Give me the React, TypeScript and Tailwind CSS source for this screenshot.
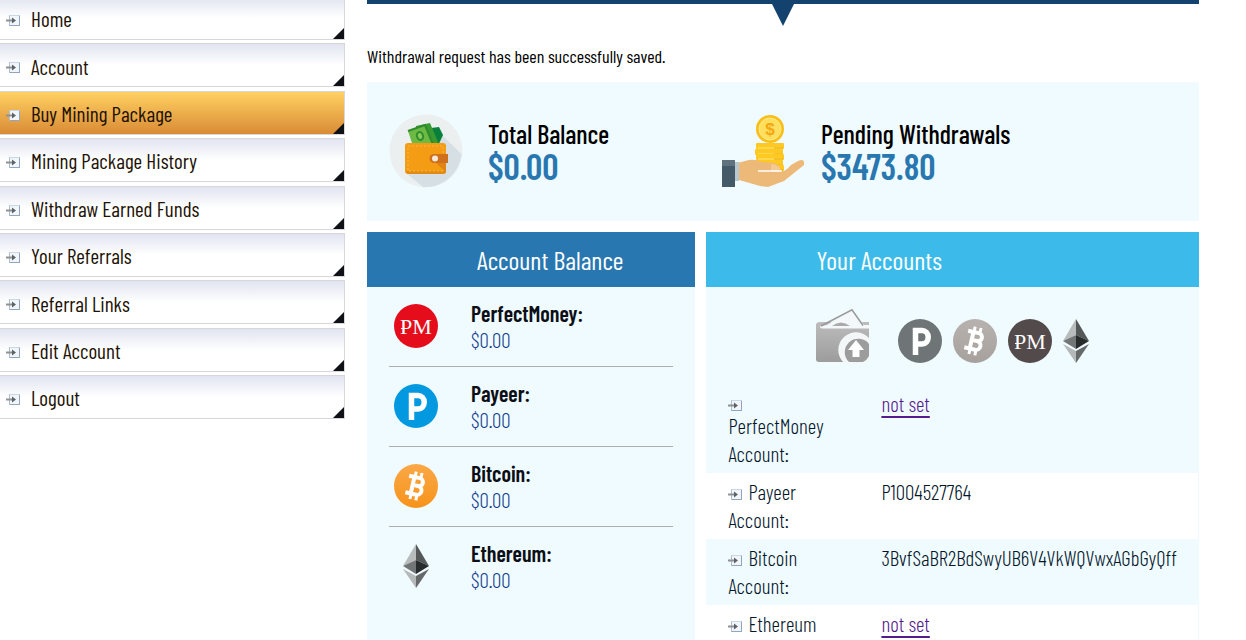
import { ReactNode } from "react";
import clsx from "clsx";

type AccountType = {
    label: string;
    value?: string;
    longLabel?: boolean;
}

const menuItems = [
    "Home",
    "Account",
    "Buy Mining Package",
    "Mining Package History",
    "Withdraw Earned Funds",
    "Your Referrals",
    "Referral Links",
    "Edit Account",
    "Logout",
]

const accounts: AccountType[] = [
    { label: "PerfectMoney Account:", longLabel: true },
    { label: "Payeer Account:", value: "P1004527764" },
    { label: "Bitcoin Account:", value: "3BvfSaBR2BdSwyUB6V4VkWQVwxAGbGyQff" },
    { label: "Ethereum Account:" },
]

export default function App(){
    return(
        <div className="flex items-start bg-white text-black font-['Barlow_Condensed','Liberation_Sans_Narrow','Liberation_Sans',sans-serif]">
            <SideMenu/>
            <main className="flex-1 min-w-0 ml-[22px] mr-[47px]">
                <div className="h-1 bg-[#14426f]"></div>
                <svg className="block mx-auto w-[22px] h-[22px]" viewBox="0 0 22 22"><path d="M0 0H22L11 22Z" fill="#14426f"/></svg>
                <p className="pt-[18px] pb-3.5 text-lg leading-6">Withdrawal request has been successfully saved.</p>
                <section className="flex bg-[#effbff] h-[139px] px-[22px] pt-8">
                    <Total icon={<CashWallet/>} title="Total Balance" value="$0.00"/>
                    <Total icon={<HandCoins/>} title="Pending Withdrawals" value="$3473.80"/>
                </section>
                <div className="grid grid-cols-[2fr_3fr] gap-[11px] mt-[11px]">
                    <section className="bg-[#effbff] pb-8">
                        <h2 className="bg-[#2977b0] text-white text-[26px] leading-[55px] pl-[110px] h-[55px]">Account Balance</h2>
                        <ul className="px-[22px]">
                            <Balance icon={<PerfectMoney color="#e50d1b"/>} name="PerfectMoney:"/>
                            <Balance icon={<Payeer color="#0299e0"/>} name="Payeer:"/>
                            <Balance icon={<Bitcoin from="#faa847" to="#f7931a"/>} name="Bitcoin:"/>
                            <Balance icon={<Ethereum/>} name="Ethereum:"/>
                        </ul>
                    </section>
                    <section className="bg-[#effbff] pr-px">
                        <h2 className="bg-[#3cbbea] text-white text-[26px] leading-[55px] pl-[110px] -mr-px h-[55px]">Your Accounts</h2>
                        <div className="flex justify-center items-start h-[98px] pt-[22px]">
                            <GreyWallet/>
                            <div className="flex gap-[11px] ml-7 pt-2.5">
                                <Payeer color="#6f7577"/>
                                <Bitcoin from="#b8b2af" to="#a7a19e"/>
                                <PerfectMoney color="#534b4b"/>
                                <div className="-mx-[9px]"><Ethereum/></div>
                            </div>
                        </div>
                        <table className="w-full table-fixed text-[21px] leading-7 font-light text-[#04162a]">
                            <tbody>
                                {accounts.map((x, key) => <AccountRow account={x} key={key}/>)}
                            </tbody>
                        </table>
                    </section>
                </div>
            </main>
        </div>
    )
}

function SideMenu(){
    return(
        <nav className="w-[345px] shrink-0 -mt-1">
            <ul className="flex flex-col justify-between h-[423px]">
                {menuItems.map((x) =>
                    <li key={x}>
                        <a href="#" className={clsx(
                            "relative flex items-center h-11 pt-0.5 pl-1.5 gap-[11px] border border-l-0 border-[#d7d7d9] text-[21px] text-[#1d1205]",
                            x === "Buy Mining Package" ? "bg-linear-to-b from-[#ffd162] to-[#d98b35]" : "bg-linear-to-b from-[#e1e4f0] to-white to-50%"
                        )}>
                            <span className="flex pt-1"><ArrowIcon/></span>
                            {x}
                            <svg className="absolute right-0 bottom-0 w-[11px] h-[11px]" viewBox="0 0 11 11"><path d="M11 0V11H0Z" fill="#0f1116"/></svg>
                        </a>
                    </li>
                )}
            </ul>
        </nav>
    )
}

function Total({icon, title, value}: {icon: ReactNode, title: string, value: string}){
    return(
        <div className="flex w-[333px]">
            <div className="w-[99px]">{icon}</div>
            <div className="pt-1">
                <h3 className="text-[26px] leading-8 font-medium whitespace-nowrap">{title}</h3>
                <p className="text-4xl leading-8 font-semibold text-[#2977b0]">{value}</p>
            </div>
        </div>
    )
}

function Balance({icon, name}: {icon: ReactNode, name: string}){
    return(
        <li className="flex h-20 border-b border-[#b0adae] last:border-b-0 pl-[5px]">
            <div className="w-[77px] pt-[17px]">{icon}</div>
            <div className="pt-3">
                <h3 className="text-[22px] leading-7 font-semibold text-[#0c0f16]">{name}</h3>
                <p className="text-[21px] leading-[26px] font-light text-[#153f8e]">$0.00</p>
            </div>
        </li>
    )
}

function AccountRow({account}: {account: AccountType}){
    return(
        <tr className="even:bg-white align-top">
            <th scope="row" className="w-[175px] pl-[22px] pr-11 py-[5px] font-light text-left">
                <span className={account.longLabel ? "flex items-center h-[22px] pt-2.5" : "inline-block mr-1.5"}><ArrowIcon/></span>
                {account.label}
            </th>
            <td className="py-[5px]">
                {account.value ?? <a href="#" className="text-[#551a8b] underline underline-offset-4 decoration-2">not set</a>}
            </td>
        </tr>
    )
}

function ArrowIcon(){
    return(
        <svg className="inline-block w-3.5 h-3 shrink-0" viewBox="0 0 14 12">
            <rect x="3.5" y="0.5" width="10" height="10" fill="#f2f6fb" stroke="#a9bed6"/>
            <path d="M3.500 0.500H13.500" stroke="#c6d8ea"/>
            <path d="M13.500 1V10.500H4" fill="none" stroke="#8fa6c0"/>
            <path d="M0 5.500H7" stroke="#8f9193" strokeWidth="2"/>
            <path d="M6 2.500L10 5.500L6 8.500Z" fill="#5b6268"/>
        </svg>
    )
}

function CashWallet(){
    return(
        <svg className="w-[74px] h-[74px]" viewBox="0 0 74 74">
            <circle cx="37" cy="37" r="36.500" fill="#ebeff0"/>
            <path d="M54 22L72.500 40A36.500 36.500 0 0 1 34 73L17 59Z" fill="#d6dfe3"/>
            <path d="M34 15L50 13L54 21L48 34L30 34Z" fill="#087f3b"/>
            <path d="M27 12L41 9L49 28L46 37L26 37Z" fill="#399a32"/>
            <path d="M19 17L36 11L45 33L26 38Z" fill="#6cb944"/>
            <path d="M19 17L36 11L45 33" fill="none" stroke="#308b2d" strokeWidth="2"/>
            <ellipse cx="31" cy="22" rx="3" ry="4" transform="rotate(-20 31 22)" fill="#8acb54" stroke="#2f8d30" strokeWidth="2"/>
            <rect x="16" y="29" width="41" height="31" rx="3" fill="#f49c14"/>
            <path d="M17 57Q17 60 21 60H54Q57 60 57 57Z" fill="#e28b12"/>
            <rect x="19" y="32" width="35" height="25" fill="none" stroke="#f9b54a" strokeDasharray="2 2"/>
            <path d="M45 40H59V49H45A4.500 4.500 0 0 1 45 40Z" fill="#cf701c"/>
            <path d="M47 49H57V58Z" fill="#df8415"/>
            <circle cx="46" cy="44.500" r="3" fill="#f6e9dc"/>
        </svg>
    )
}

function HandCoins(){
    return(
        <svg className="w-[83px] h-[76px]" viewBox="0 0 83 76">
            {[29, 35, 40, 46, 51].map((y, key) =>
                <g key={y}>
                    <rect x={key % 2 ? 33 : 34} y={y} width="28" height="6" rx="1" fill="#fdc922"/>
                    <path d={`M36 ${y + 5}H60`} stroke="#ffe578"/>
                    <path d={`M52 ${y + 5}H61`} stroke="#eaa90d"/>
                </g>
            )}
            <rect x="45" y="55" width="16" height="4" fill="#f5b915"/>
            <circle cx="48" cy="15" r="14" fill="#f8bf18"/>
            <circle cx="48" cy="15" r="11" fill="#ffdf5d" stroke="#ffe888"/>
            <text x="48" y="21" textAnchor="middle" fontSize="17" fontWeight="bold" fontFamily="Liberation Sans" fill="#f2a713">$</text>
            <path d="M15 49L27 46Q33 45 40 48L52 49Q58 51 59 58Q64 57 69 51L76 47Q83 44 82 51L62 67L46 73L38 72L17 66Z" fill="#edb978"/>
            <path d="M49 50Q58 50 59 58H49Z" fill="#f5c996"/>
            <path d="M36 57H60" stroke="#fff" strokeWidth="1.500"/>
            <rect x="13" y="48" width="4" height="19" fill="#b8c8d0"/>
            <path d="M0 46H13V73H0Z" fill="#455a68"/>
            <path d="M0 46H13V52H0Z" fill="#60727d"/>
        </svg>
    )
}

function PerfectMoney({color}: {color: string}){
    return(
        <svg className="w-11 h-11" viewBox="0 0 44 44">
            <circle cx="22" cy="22" r="22" fill={color}/>
            <text x="22" y="30" textAnchor="middle" fontSize="22" fontFamily="Liberation Serif" fill="#fff">PM</text>
            <path d="M7 24.500H12" stroke="#fff"/>
        </svg>
    )
}

function Payeer({color}: {color: string}){
    return(
        <svg className="w-11 h-11" viewBox="0 0 44 44">
            <circle cx="22" cy="22" r="22" fill={color}/>
            <path d="M17.500 36V11.500H24A6 6.500 0 0 1 24 25H18" fill="none" stroke="#fff" strokeWidth="5.500"/>
        </svg>
    )
}

function Bitcoin({from, to}: {from: string, to: string}){
    const id = "coin" + from.slice(1)
    return(
        <svg className="w-11 h-11" viewBox="0 0 44 44">
            <defs>
                <linearGradient id={id} x1="0" y1="0" x2="0" y2="1"><stop stopColor={from}/><stop offset="1" stopColor={to}/></linearGradient>
            </defs>
            <circle cx="22" cy="22" r="22" fill={`url(#${id})`}/>
            <g transform="rotate(13 22 22)" fill="none" stroke="#fff">
                <path d="M19 8V13M25 8V13M19 31V36M25 31V36" strokeWidth="3"/>
                <path d="M13 13.500H24A4 4 0 0 1 24 21.500H18M24 21.500A4.500 4.500 0 0 1 24 30.500H13M18.500 13V31" strokeWidth="4"/>
            </g>
        </svg>
    )
}

function Ethereum(){
    return(
        <svg className="w-11 h-11" viewBox="0 0 44 44">
            <path d="M22 0L9 22L22 16Z" fill="#b9bcbd"/>
            <path d="M22 0L35 22L22 16Z" fill="#555858"/>
            <path d="M9 22L22 16V30Z" fill="#737677"/>
            <path d="M35 22L22 16V30Z" fill="#282b2c"/>
            <path d="M9 25L22 32V44Z" fill="#b5b8b8"/>
            <path d="M35 25L22 32V44Z" fill="#666969"/>
        </svg>
    )
}

function GreyWallet(){
    return(
        <svg className="w-[54px] h-[55px]" viewBox="0 0 54 55">
            <defs>
                <linearGradient id="wallet" x1="0" y1="0" x2="0" y2="1"><stop stopColor="#bcbcbc"/><stop offset="1" stopColor="#9c9c9c"/></linearGradient>
            </defs>
            <path d="M4 13H53V53H3Q0 53 0 50V16Q0 13 4 13Z" fill="url(#wallet)"/>
            <path d="M4 17L11 16L36 0.500L48 16H53V19.500H6Q4 19.500 4 17Z" fill="#f3f8fa"/>
            <path d="M5 17L36 0.800L47 16.500" fill="none" stroke="#999" strokeWidth="1.500"/>
            <path d="M16 17Q25 10 34 17Z" fill="#aaa"/>
            <path d="M53 29A15.500 15.500 0 0 0 27 53H53Z" fill="#f4f7f8"/>
            <circle cx="40" cy="40" r="15" fill="#f4f7f8"/>
            <path d="M53 35A13.500 13.500 0 1 0 33 53H47Q51 51 53 47Z" fill="#9c9c9c"/>
            <path d="M40 31L48 41H43.500V48H36.500V41H32Z" fill="#fff"/>
        </svg>
    )
}
